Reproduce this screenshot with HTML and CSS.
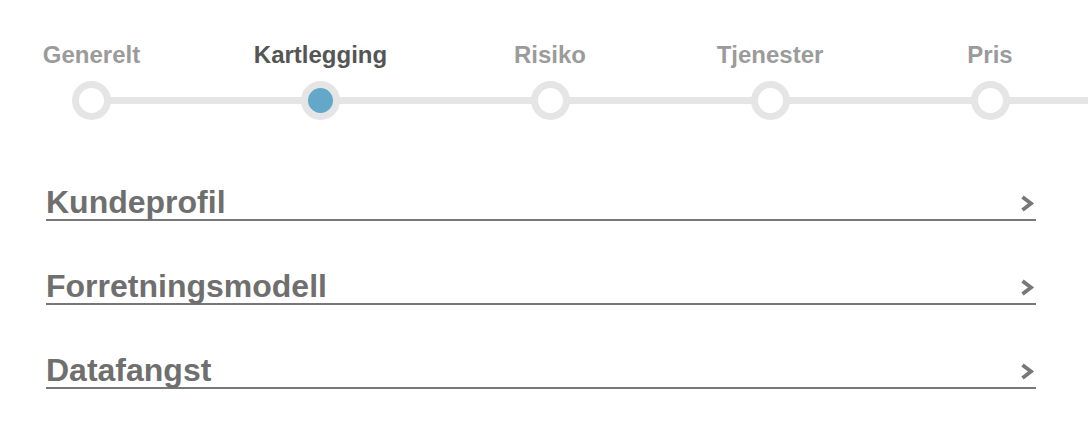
FILE: index.html
```html
<!DOCTYPE html>
<html lang="no">
<head>
<meta charset="utf-8">
<title>Kartlegging</title>
<link rel="stylesheet" href="styles.css">
</head>
<body>
<div class="page">
  <nav class="stepper">
    <div class="step">
      <span class="step-label">Generelt</span>
      <span class="step-dot"></span>
    </div>
    <div class="step step-active">
      <span class="step-label">Kartlegging</span>
      <span class="step-dot"></span>
    </div>
    <div class="step">
      <span class="step-label">Risiko</span>
      <span class="step-dot"></span>
    </div>
    <div class="step">
      <span class="step-label">Tjenester</span>
      <span class="step-dot"></span>
    </div>
    <div class="step">
      <span class="step-label">Pris</span>
      <span class="step-dot"></span>
    </div>
  </nav>

  <section class="sections">
    <div class="section-row">
      <span class="section-title">Kundeprofil</span>
      <svg class="chevron" viewBox="0 0 15 17" width="15" height="17"><polyline points="2.5,2 11,8.5 2.5,15"/></svg>
    </div>
    <div class="section-row">
      <span class="section-title">Forretningsmodell</span>
      <svg class="chevron" viewBox="0 0 15 17" width="15" height="17"><polyline points="2.5,2 11,8.5 2.5,15"/></svg>
    </div>
    <div class="section-row">
      <span class="section-title">Datafangst</span>
      <svg class="chevron" viewBox="0 0 15 17" width="15" height="17"><polyline points="2.5,2 11,8.5 2.5,15"/></svg>
    </div>
  </section>
</div>
</body>
</html>
```

FILE: styles.css
```css
html, body {
  margin: 0;
  padding: 0;
  background: #ffffff;
}

body {
  font-family: "Liberation Sans", Arial, Helvetica, sans-serif;
  overflow: hidden;
}

.page {
  width: 1088px;
  height: 426px;
}

.stepper {
  position: relative;
  display: grid;
  grid-template-columns: 183px 275px 184px 256px 184px;
  padding-top: 41px;
}

.stepper::before {
  content: "";
  position: absolute;
  left: 92px;
  right: 0;
  top: 97px;
  height: 7px;
  background: #e5e5e5;
}

.step {
  position: relative;
  display: flex;
  flex-direction: column;
  align-items: center;
  gap: 12px;
}

.step-label {
  font-size: 24px;
  line-height: 28px;
  font-weight: 700;
  color: #9b9b9b;
  white-space: nowrap;
}

.step-active .step-label {
  color: #555555;
}

.step-dot {
  display: block;
  width: 25px;
  height: 25px;
  border: 7px solid #e5e5e5;
  border-radius: 50%;
  background: #ffffff;
}

.step-active .step-dot {
  background: #63a8c8;
}

.sections {
  margin: 65px 52px 0 46px;
  display: flex;
  flex-direction: column;
  gap: 48px;
}

.section-row {
  display: flex;
  justify-content: space-between;
  align-items: center;
  border-bottom: 2px solid #777777;
}

.section-title {
  font-size: 32px;
  line-height: 34px;
  font-weight: 700;
  color: #6f6f6f;
}

.chevron {
  margin-right: 1px;
  margin-top: 2px;
  fill: none;
  stroke: #777777;
  stroke-width: 3.8;
}
```
